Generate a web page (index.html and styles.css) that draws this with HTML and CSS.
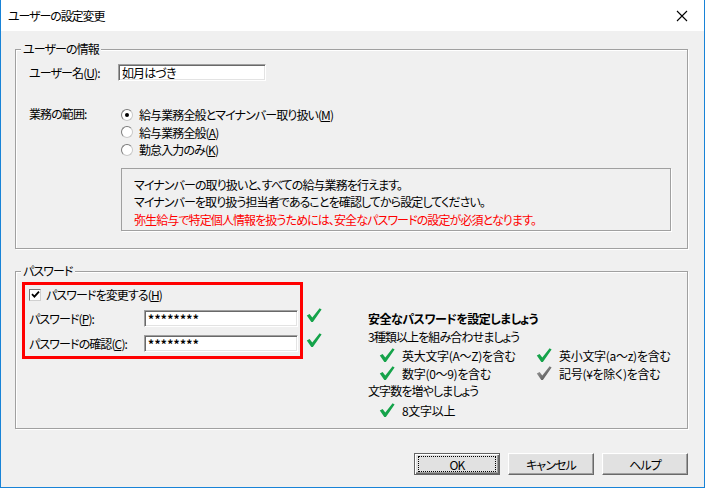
FILE: index.html
```html
<!DOCTYPE html>
<html lang="ja">
<head>
<meta charset="utf-8">
<title>ユーザーの設定変更</title>
<link rel="stylesheet" href="styles.css">
</head>
<body>
<div class="window">
  <div class="titlebar">
    <span class="title">ユーザーの設定変更</span>
    <svg class="close" width="12" height="12" viewBox="0 0 12 12"><path d="M1 1L11 11M11 1L1 11" stroke="#000" stroke-width="1.1" fill="none"/></svg>
  </div>
  <div class="content">
    <div class="group group-user">
      <span class="legend">ユーザーの情報</span>
      <div class="row row-name">
        <span class="label">ユーザー名(<u>U</u>):</span>
        <div class="input input-name">如月はづき</div>
      </div>
      <div class="row row-scope">
        <span class="label">業務の範囲:</span>
        <div class="radios">
          <div class="radio-row"><span class="radio checked"></span><span>給与業務全般とマイナンバー取り扱い(<u>M</u>)</span></div>
          <div class="radio-row"><span class="radio"></span><span>給与業務全般(<u>A</u>)</span></div>
          <div class="radio-row"><span class="radio"></span><span>勤怠入力のみ(<u>K</u>)</span></div>
        </div>
      </div>
      <div class="info">
        <p>マイナンバーの取り扱いと、すべての給与業務を行えます。</p>
        <p>マイナンバーを取り扱う担当者であることを確認してから設定してください。</p>
        <p class="warn">弥生給与で特定個人情報を扱うためには、安全なパスワードの設定が必須となります。</p>
      </div>
    </div>

    <div class="group group-pass">
      <span class="legend">パスワード</span>
      <div class="pass-layout">
        <div class="left-col">
          <div class="redbox">
            <div class="check-row">
              <span class="checkbox"><svg width="9" height="9" viewBox="0 0 9 9"><path d="M1 4.2L3.4 6.6L8 1.6" stroke="#000" stroke-width="1.8" fill="none"/></svg></span>
              <span>パスワードを変更する(<u>H</u>)</span>
            </div>
            <div class="field-row">
              <span class="flabel">パスワード(<u>P</u>):</span>
              <div class="input input-pass">********</div>
            </div>
            <div class="field-row">
              <span class="flabel">パスワードの確認(<u>C</u>):</span>
              <div class="input input-pass">********</div>
            </div>
          </div>
          <div class="ok-checks">
            <svg class="tick" width="16" height="16" viewBox="0 0 16 16"><path d="M0.8 8.6L3.6 6.9L6.3 10.6L13.6 1.2L15.6 2.6L6.9 14.9L5.3 14.9Z" fill="#15a34a"/></svg>
            <svg class="tick" width="16" height="16" viewBox="0 0 16 16"><path d="M0.8 8.6L3.6 6.9L6.3 10.6L13.6 1.2L15.6 2.6L6.9 14.9L5.3 14.9Z" fill="#15a34a"/></svg>
          </div>
        </div>
        <div class="guide">
          <div class="guide-title">安全なパスワードを設定しましょう</div>
          <div class="guide-line">3種類以上を組み合わせましょう</div>
          <div class="req-grid">
            <div class="req"><svg class="tick" width="16" height="16" viewBox="0 0 16 16"><path d="M0.8 8.6L3.6 6.9L6.3 10.6L13.6 1.2L15.6 2.6L6.9 14.9L5.3 14.9Z" fill="#15a34a"/></svg><span>英大文字(A～Z)を含む</span></div>
            <div class="req"><svg class="tick" width="16" height="16" viewBox="0 0 16 16"><path d="M0.8 8.6L3.6 6.9L6.3 10.6L13.6 1.2L15.6 2.6L6.9 14.9L5.3 14.9Z" fill="#15a34a"/></svg><span>英小文字(a～z)を含む</span></div>
            <div class="req"><svg class="tick" width="16" height="16" viewBox="0 0 16 16"><path d="M0.8 8.6L3.6 6.9L6.3 10.6L13.6 1.2L15.6 2.6L6.9 14.9L5.3 14.9Z" fill="#15a34a"/></svg><span>数字(0～9)を含む</span></div>
            <div class="req"><svg class="tick" width="16" height="16" viewBox="0 0 16 16"><defs><linearGradient id="g" x1="0" y1="0" x2="1" y2="1"><stop offset="0" stop-color="#a8a8a8"/><stop offset="1" stop-color="#454545"/></linearGradient></defs><path d="M0.8 8.6L3.6 6.9L6.3 10.6L13.6 1.2L15.6 2.6L6.9 14.9L5.3 14.9Z" fill="url(#g)"/></svg><span>記号(¥を除く)を含む</span></div>
          </div>
          <div class="guide-line">文字数を増やしましょう</div>
          <div class="req req-single"><svg class="tick" width="16" height="16" viewBox="0 0 16 16"><path d="M0.8 8.6L3.6 6.9L6.3 10.6L13.6 1.2L15.6 2.6L6.9 14.9L5.3 14.9Z" fill="#15a34a"/></svg><span>8文字以上</span></div>
        </div>
      </div>
    </div>

    <div class="buttons">
      <button class="btn default"><span class="focus">OK</span></button>
      <button class="btn">キャンセル</button>
      <button class="btn">ヘルプ</button>
    </div>
  </div>
</div>
</body>
</html>
```
FILE: styles.css
```css
html, body {
  margin: 0;
  padding: 0;
}
body {
  width: 705px;
  height: 488px;
  font-family: "Noto Sans CJK JP", "Noto Sans", sans-serif;
  font-size: 12px;
  color: #000;
  font-feature-settings: "palt";
  letter-spacing: -0.9px;
  overflow: hidden;
}
p { margin: 0; }
u { text-decoration: underline; text-underline-offset: 1px; }

.window {
  box-sizing: border-box;
  width: 705px;
  height: 488px;
  border: 1px solid #1883d7;
  border-top: none;
  display: flex;
  flex-direction: column;
  background: #f0f0f0;
}
.titlebar {
  height: 31px;
  background: #fff;
  display: flex;
  align-items: center;
  justify-content: space-between;
  padding: 0 16px 0 7px;
  flex: none;
}
.title { font-size: 12px; line-height: 14px; letter-spacing: -1.1px; }
.close { display: block; }

.content {
  flex: 1;
  padding: 18px 16px 0 14px;
  display: flex;
  flex-direction: column;
}

.group {
  position: relative;
  box-sizing: border-box;
  border: 1px solid #a0a0a0;
  box-shadow: inset 1px 1px 0 #fff, 1px 1px 0 #fff;
  flex: none;
}
.legend {
  position: absolute;
  top: -8px;
  left: 5px;
  padding: 0 2px;
  background: #f0f0f0;
  line-height: 14px;
}
.group-user {
  height: 200px;
  padding: 14px 16px 0 13px;
}
.row { display: flex; }
.label { width: 89px; flex: none; line-height: 17px; }
.input {
  box-sizing: border-box;
  background: #fff;
  border: 1px solid;
  border-color: #a0a0a0 #fff #fff #a0a0a0;
  box-shadow: inset 1px 1px 0 #696969, inset -1px -1px 0 #e3e3e3;
  height: 17px;
  line-height: 15px;
  padding-left: 3px;
}
.input-name { width: 148px; }
.row-scope { margin-top: 25px; }
.row-scope .label { line-height: 16px; }
.radios { display: flex; flex-direction: column; margin-left: 3px; }
.radio-row {
  display: flex;
  align-items: center;
  height: 17.5px;
  gap: 6px;
}
.radio {
  box-sizing: border-box;
  width: 12px;
  height: 12px;
  border-radius: 50%;
  background: #fff;
  border: 1px solid;
  border-color: #7a7a7a #c8c8c8 #c8c8c8 #7a7a7a;
  display: flex;
  align-items: center;
  justify-content: center;
}
.radio.checked::after {
  content: "";
  width: 4px;
  height: 4px;
  border-radius: 50%;
  background: #000;
}
.info {
  margin: 9px 0 0 92px;
  height: 63px;
  box-sizing: border-box;
  border: 1px solid #a0a0a0;
  box-shadow: 1px 1px 0 #fff;
  padding: 7px 0 0 12px;
}
.info p { line-height: 17.5px; }
.info .warn { color: #ff0000; }

.group-pass {
  margin-top: 22px;
  height: 158px;
  padding: 10px 0 0 6px;
}
.pass-layout { display: flex; }
.left-col { display: flex; flex: none; }
.redbox {
  width: 281px;
  box-sizing: border-box;
  height: 77px;
  border: 3px solid #ff0000;
  padding: 3px 2px 0 4px;
}
.check-row {
  display: flex;
  align-items: center;
  height: 13px;
  gap: 5px;
}
.checkbox {
  box-sizing: border-box;
  width: 12px;
  height: 12px;
  background: #fff;
  border: 1px solid;
  border-color: #7a7a7a #d0d0d0 #d0d0d0 #7a7a7a;
  display: flex;
  align-items: center;
  justify-content: center;
}
.checkbox svg { display: block; }
.field-row {
  display: flex;
  align-items: center;
  height: 17px;
}
.field-row + .field-row { margin-top: 8px; }
.check-row + .field-row { margin-top: 9px; }
.flabel { width: 115px; flex: none; }
.input-pass { width: 154px; letter-spacing: 0.3px; font-weight: bold; }
.ok-checks {
  display: flex;
  flex-direction: column;
  padding: 25px 0 0 3px;
  gap: 9px;
}
.tick { display: block; flex: none; }

.guide {
  margin-left: 46px;
  padding-top: 28px;
}
.guide-title { font-weight: bold; line-height: 18px; letter-spacing: -0.5px; }
.guide-line { line-height: 18px; }
.req-grid {
  display: grid;
  grid-template-columns: 157px auto;
  row-gap: 0;
  padding-left: 11px;
}
.req {
  display: flex;
  align-items: center;
  gap: 7px;
  height: 18px;
  letter-spacing: -0.3px;
}
.req-single { padding-left: 11px; margin-top: 1px; }

.buttons {
  display: flex;
  justify-content: flex-end;
  gap: 8px;
  margin-top: 24px;
}
.btn {
  box-sizing: border-box;
  width: 86px;
  height: 22px;
  background: #e1e1e1;
  font: inherit;
  font-size: 12px;
  letter-spacing: -0.9px;
  color: #000;
  border: 1px solid;
  border-color: #fff #696969 #696969 #fff;
  box-shadow: inset -1px -1px 0 #a0a0a0, inset 1px 1px 0 #e3e3e3;
  padding: 0;
  display: flex;
  align-items: center;
  justify-content: center;
}
.btn.default {
  border: 1px solid #646464;
  box-shadow: inset 1px 1px 0 #fff, inset -1px -1px 0 #696969, inset -2px -2px 0 #a0a0a0;
}
.focus {
  box-sizing: border-box;
  width: 78px;
  height: 16px;
  border: 1px dotted #000;
  display: flex;
  align-items: center;
  justify-content: center;
}
```
